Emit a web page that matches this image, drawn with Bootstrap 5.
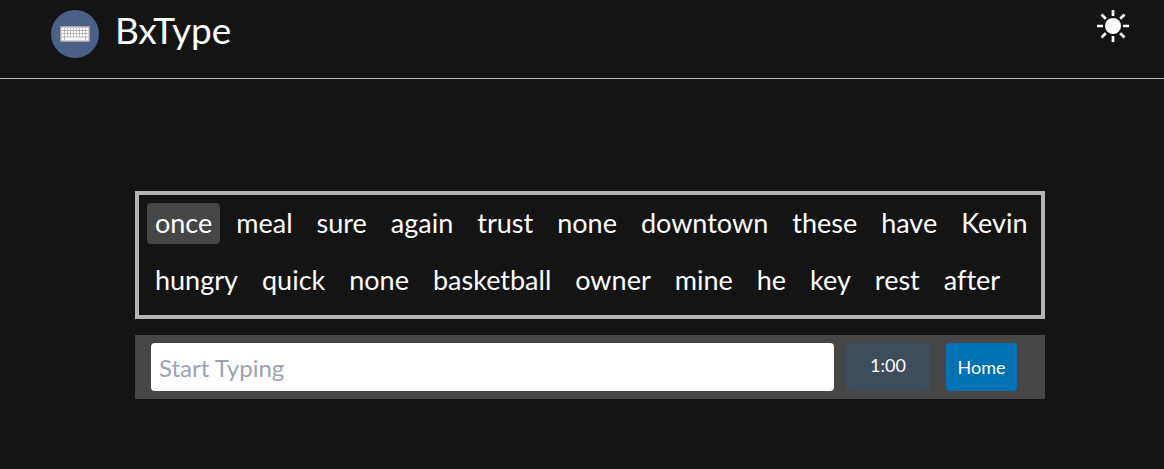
<!DOCTYPE html>
<html lang="en">
<head>
<meta charset="utf-8">
<meta name="viewport" content="width=device-width, initial-scale=1">
<title>BxType</title>
<link href="https://cdn.jsdelivr.net/npm/bootstrap@5.3.0/dist/css/bootstrap.min.css" rel="stylesheet">
<style>
  body { background: #141414; color: #fff; font-family: Lato, "Liberation Sans", sans-serif; font-variant-ligatures: none; }
  .topbar { border-bottom: 1px solid #b3b3b3; padding: 10px 32px 20px 51px; }
  .brand-name { font-size: 37px; line-height: 40px; color: #fff; }
  .theme-btn { background: none; border: 0; line-height: 0; }
  .typing-area { max-width: 926px; padding-left: 16px; margin-top: 112px; }
  .word-box { border: 4px solid #b3b3b3; padding: 8px 0 14px 8px; row-gap: 16px; column-gap: 8px; font-size: 27px; line-height: 39px; }
  .word { padding: 0 8px 2px; border-radius: 4px; }
  .word.current { background: #464646; }
  .control-bar { background: #464646; padding: 8px 28px 8px 16px; }
  .type-input, .type-input:focus { height: 48px; padding: 4px 8px; border: 0; border-radius: 4px; background: #fff; color: #141414; font-size: 24px; }
  .type-input::placeholder { color: #9ca3af; }
  .timer { width: 84px; height: 48px; margin-left: 12px; padding-bottom: 3px; border-radius: 4px; background: #3d4d5c; font-size: 18px; }
  .home-btn { width: 71px; height: 48px; padding: 0; border: 0; border-radius: 4px; background: #0072b1; color: #fff; font-size: 18px; }
</style>
</head>
<body>
<header class="topbar d-flex justify-content-between align-items-start">
  <a href="#" class="d-flex align-items-start gap-3 text-decoration-none">
    <svg width="48" height="48" viewBox="0 0 48 48" aria-hidden="true">
      <circle cx="24" cy="24" r="24" fill="#4b6087"/>
      <rect x="9" y="16" width="30" height="16" rx="1" fill="#a3a3a3"/>
      <rect x="10.500" y="17.500" width="27" height="13" fill="#fff"/>
      <path d="M11 20.500H37M11 23.500H37M11 27H37M13.500 18V30M16.500 18V27M19.500 18V27M22.500 18V27M25.500 18V27M28.500 18V27M31.500 18V27M34.500 18V30" stroke="#b8b8b8" stroke-width="1" fill="none"/>
    </svg>
    <span class="brand-name">BxType</span>
  </a>
  <button type="button" class="theme-btn p-0" aria-label="Switch to light theme">
    <svg width="38" height="32" viewBox="-19 -16 38 32" aria-hidden="true">
      <circle r="8" fill="#fff"/>
      <path d="M0-16V-10M0 10V16M-16 0H-10M10 0H16M-11.500-11.500L-7.200-7.200M7.200 7.200L11.500 11.500M-11.500 11.500L-7.200 7.200M7.200-7.200L11.500-11.500" stroke="#fff" stroke-width="2.700"/>
    </svg>
  </button>
</header>
<main class="typing-area mx-auto">
  <div class="word-box d-flex flex-wrap">
    <span class="word current">once</span><span class="word">meal</span><span class="word">sure</span><span class="word">again</span><span class="word">trust</span><span class="word">none</span><span class="word">downtown</span><span class="word">these</span><span class="word">have</span><span class="word">Kevin</span><span class="word">hungry</span><span class="word">quick</span><span class="word">none</span><span class="word">basketball</span><span class="word">owner</span><span class="word">mine</span><span class="word">he</span><span class="word">key</span><span class="word">rest</span><span class="word">after</span>
  </div>
  <form class="control-bar d-flex mt-3">
    <input type="text" class="type-input form-control flex-fill w-auto" placeholder="Start Typing" aria-label="Start Typing">
    <div class="timer d-flex flex-shrink-0 align-items-center justify-content-center me-3">1:00</div>
    <button type="button" class="btn home-btn flex-shrink-0">Home</button>
  </form>
</main>
<script src="https://cdn.jsdelivr.net/npm/bootstrap@5.3.0/dist/js/bootstrap.bundle.min.js"></script>
</body>
</html>
